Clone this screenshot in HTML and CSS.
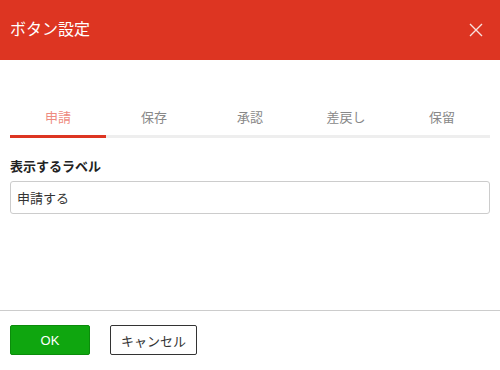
FILE: index.html
```html
<!DOCTYPE html>
<html lang="ja">
<head>
    <meta charset="UTF-8">
    <meta name="viewport" content="width=device-width, initial-scale=1.0">
    <title>ボタン設定</title>
    <link rel="stylesheet" href="styles.css">
</head>
<body>

    <div class="dialog">
        <div class="header">
            <h2>ボタン設定</h2>
            <button class="close" aria-label="閉じる">
                <svg width="14" height="14" viewBox="0 0 14 14">
                    <path d="M1 1 L13 13 M13 1 L1 13" stroke="#fff" stroke-width="1.4" fill="none"/>
                </svg>
            </button>
        </div>

        <div class="content">
            <div class="tabs">
                <div class="tab active">申請</div>
                <div class="tab">保存</div>
                <div class="tab">承認</div>
                <div class="tab">差戻し</div>
                <div class="tab">保留</div>
            </div>

            <label class="label" for="labelText">表示するラベル</label>
            <input type="text" id="labelText" class="field" value="申請する">
        </div>

        <div class="footer">
            <button class="btn btn-ok">OK</button>
            <button class="btn btn-cancel">キャンセル</button>
        </div>
    </div>

</body>
</html>
```

FILE: styles.css
```css
* { font-family: "Liberation Sans", "Noto Sans CJK JP", sans-serif; margin: 0; padding: 0; box-sizing: border-box; }
body { background: #fff; width: 500px; height: 370px; }
.dialog { display: flex; flex-direction: column; height: 370px; }
.header { background: #dd3522; height: 60px; padding: 0 10px; display: flex; align-items: center; justify-content: space-between; color: #fff; }
.header h2 { font-size: 16px; font-weight: normal; line-height: 20px; }
.close { background: none; border: none; width: 14px; height: 14px; margin-right: 7px; opacity: 0.85; cursor: pointer; display: flex; }
.content { flex: 1; padding: 48px 10px 0; }
.tabs { display: flex; border-bottom: 3px solid #eee; }
.tab { flex: 1; text-align: center; font-size: 13px; line-height: 19px; padding-bottom: 8px; color: #888; border-bottom: 3px solid transparent; margin-bottom: -3px; }
.tab.active { color: #ee8b7f; border-bottom-color: #dd3522; }
.label { display: block; font-size: 13px; font-weight: bold; line-height: 18px; margin-top: 20px; color: #222; }
.field { display: block; width: 100%; height: 33px; margin-top: 5px; padding: 0 6px; border: 1px solid #ccc; border-radius: 3px; font-size: 13px; color: #333; outline: none; }
.footer { border-top: 1px solid #ccc; height: 60px; padding: 14px 10px 0; display: flex; gap: 20px; align-items: flex-start; }
.btn { height: 30px; font-size: 13px; border-radius: 2px; cursor: pointer; }
.btn-ok { width: 80px; background: #0fa60f; border: 1px solid #0b8c0b; color: #fff; }
.btn-cancel { width: 87px; background: #fff; border: 1px solid #333; color: #333; }
```
